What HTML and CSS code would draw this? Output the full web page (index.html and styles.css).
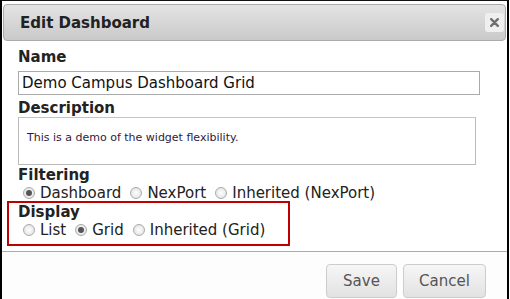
FILE: index.html
```html
<!DOCTYPE html>
<html lang="en">
<head>
  <meta charset="UTF-8">
  <title>Edit Dashboard</title>
  <link rel="stylesheet" href="styles.css">
</head>
<body>
  <div class="dialog">
    <div class="titlebar">
      <span class="title">Edit Dashboard</span>
      <span class="close">
        <svg width="9" height="9" viewBox="0 0 9 9"><path d="M1.2 1.2L7.8 7.8M7.8 1.2L1.2 7.8" stroke="#707070" stroke-width="2.4" stroke-linecap="round"/></svg>
      </span>
    </div>
    <div class="content">
      <label class="field-label">Name</label>
      <input class="name-input" type="text" value="Demo Campus Dashboard Grid">
      <label class="field-label">Description</label>
      <div class="desc-box">This is a demo of the widget flexibility.</div>
      <label class="field-label">Filtering</label>
      <div class="radios">
        <span class="radio checked"></span><span class="opt">Dashboard</span>
        <span class="radio"></span><span class="opt">NexPort</span>
        <span class="radio"></span><span class="opt">Inherited (NexPort)</span>
      </div>
      <div class="highlight">
        <label class="field-label">Display</label>
        <div class="radios">
          <span class="radio"></span><span class="opt">List</span>
          <span class="radio checked"></span><span class="opt">Grid</span>
          <span class="radio"></span><span class="opt">Inherited (Grid)</span>
        </div>
      </div>
    </div>
    <div class="footer">
      <button class="btn save">Save</button>
      <button class="btn cancel">Cancel</button>
    </div>
  </div>
</body>
</html>
```

FILE: styles.css
```css
html, body {
  margin: 0;
  padding: 0;
  background: #fff;
}
body {
  font-family: "DejaVu Sans", Verdana, sans-serif;
  color: #222;
}
.dialog {
  width: 509px;
  height: 299px;
  box-sizing: border-box;
  border-top: 1px solid #111;
  border-left: 2px solid #000;
  border-right: 2px solid #000;
  border-bottom: 2px solid #000;
  display: flex;
  flex-direction: column;
}
.titlebar {
  margin: 3px 1px 0 1px;
  height: 37px;
  flex: none;
  box-sizing: border-box;
  border: 1px solid #aaa;
  border-radius: 4px;
  background: linear-gradient(#e4e4e4, #c9c9c9);
  display: flex;
  align-items: center;
  justify-content: space-between;
  padding: 0 1px 0 16px;
}
.title {
  font-weight: bold;
  font-size: 15px;
  color: #222;
}
.close {
  width: 19px;
  height: 19px;
  border-radius: 3px;
  background: #efefef;
  display: flex;
  align-items: center;
  justify-content: center;
}
.content {
  padding: 8px 0 0 16px;
  height: 202px;
  flex: none;
}
.field-label {
  display: block;
  font-weight: bold;
  font-size: 15px;
  line-height: 17px;
  color: #222;
}
.name-input {
  display: block;
  width: 462px;
  height: 24px;
  box-sizing: border-box;
  margin: 5px 0 5px 0;
  border: 1px solid #aaa;
  padding: 0 3px;
  font-family: inherit;
  font-size: 15px;
  color: #111;
}
.desc-box {
  width: 458px;
  height: 48px;
  box-sizing: border-box;
  margin: 0 0 2px 0;
  border: 1px solid #bbb;
  border-top-color: #c4c4c4;
  padding: 13px 8px 0 8px;
  font-size: 11px;
  color: #2e1a40;
}
.radios {
  display: flex;
  align-items: center;
  height: 17px;
  font-size: 15px;
  color: #222;
}
.radio {
  width: 12px;
  height: 12px;
  box-sizing: border-box;
  border-radius: 50%;
  border: 1px solid #aaa;
  background: radial-gradient(#fff, #dcdcdc);
  margin: 0 5px 0 9px;
  position: relative;
}
.radio:first-child {
  margin-left: 5px;
}
.radio.checked::after {
  content: "";
  position: absolute;
  left: 2px;
  top: 2px;
  width: 6px;
  height: 6px;
  border-radius: 50%;
  background: #555;
}
.highlight {
  position: relative;
  z-index: 1;
  margin: 0 0 0 -11px;
  width: 283px;
  height: 45px;
  box-sizing: border-box;
  border: 2px solid #c00000;
  padding: 1px 0 0 9px;
}
.footer {
  border-top: 1px solid #aaa;
  flex: none;
  height: 54px;
  box-sizing: border-box;
  background: #fdfdfd;
  display: flex;
  justify-content: flex-end;
  align-items: flex-start;
  padding: 12px 21px 0 0;
  gap: 6px;
}
.btn {
  height: 34px;
  padding: 0;
  border: 1px solid #ccc;
  border-radius: 4px;
  background: linear-gradient(#f6f6f6, #e2e2e2);
  font-family: inherit;
  font-size: 15px;
  color: #555;
}
.save {
  width: 71px;
}
.cancel {
  width: 83px;
}
```
